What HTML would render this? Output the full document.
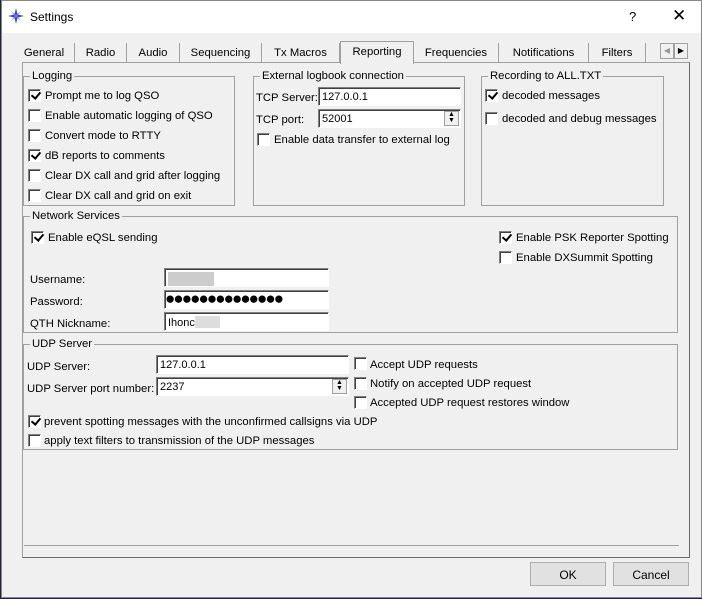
<!DOCTYPE html><html><head><style>
*{box-sizing:border-box;margin:0;padding:0}
body{width:702px;height:599px;background:#1a2340;position:relative;overflow:hidden;font-family:"Liberation Sans",sans-serif;font-size:11.3px;color:#000}
.a{position:absolute;white-space:nowrap}
.l{margin-top:2px}
.cb + .a{margin-top:1px}
.win{position:absolute;left:1px;top:0;width:701px;height:598px;background:#f0f0f0;border:1px solid #888}
.title{position:absolute;left:0;top:0;width:100%;height:32px;background:#fff}
.pane{position:absolute;left:22px;top:62px;width:668px;height:496px;border:1px solid #a0a0a0;border-right-color:#696969;border-bottom-color:#696969;background:#f0f0f0}
.tab{position:absolute;top:43px;height:20px;border-right:1px solid #a0a0a0;padding-top:4px;text-align:center}
.gb{position:absolute;border:1px solid #a0a0a0}
.gl{position:absolute;top:-7px;left:6px;background:#f0f0f0;padding:0 2px}
.cb{position:absolute;width:13px;height:13px;background:#fff;border:1px solid;border-color:#808080 #fff #fff #808080;box-shadow:inset 1px 1px 0 #404040}
.cb.c::after{content:"";position:absolute;left:4px;top:0px;width:4px;height:7px;border:solid #000;border-width:0 2px 2px 0;transform:rotate(40deg)}
.in{position:absolute;height:19px;background:#fff;border:1px solid;border-color:#808080 #fff #fff #808080;box-shadow:inset 1px 1px 0 #404040;padding:3px 3px;font-size:11px}
.spin{position:absolute;width:15px;height:15px;border:1px solid #a0a0a0;background:#f0f0f0;font-size:7px;line-height:6px;text-align:center}
.btn{position:absolute;top:562px;height:24px;border:1px solid #adadad;background:#e1e1e1;text-align:center;padding-top:5px;font-size:12px}
</style></head><body>
<div class="win">
<div class="title"></div>
<svg class="a" style="left:6px;top:7px" width="16" height="16"><path d="M8 0L9.5 6.5L16 8L9.5 9.5L8 16L6.5 9.5L0 8L6.5 6.5Z" fill="#3b3bd6"/><path d="M3 3L8 7L13 3L9 8L13 13L8 9L3 13L7 8Z" fill="#7a7af0"/></svg>
<div class="a" style="left:28px;top:9px;font-size:12px">Settings</div>
<div class="a" style="left:627px;top:8px;font-size:13px">?</div>
<div class="a" style="left:670px;top:5px;font-size:17px">✕</div>
</div>
<div class="pane"></div>
<div class="tab" style="left:14px;width:61px">General</div>
<div class="tab" style="left:75px;width:52px">Radio</div>
<div class="tab" style="left:127px;width:53px">Audio</div>
<div class="tab" style="left:180px;width:82px">Sequencing</div>
<div class="tab" style="left:262px;width:78px">Tx Macros</div>
<div class="tab" style="left:340px;top:41px;height:23px;width:74px;background:#f0f0f0;border:1px solid #a0a0a0;border-bottom:none;z-index:2">Reporting</div>
<div class="tab" style="left:414px;width:85px">Frequencies</div>
<div class="tab" style="left:499px;width:90px">Notifications</div>
<div class="tab" style="left:589px;width:57px">Filters</div>
<div class="a" style="left:660px;top:43px;width:14px;height:16px;border:1px solid #a0a0a0;font-size:8px;color:#999;text-align:center;line-height:14px">◀</div>
<div class="a" style="left:674px;top:43px;width:14px;height:16px;border:1px solid #a0a0a0;font-size:8px;text-align:center;line-height:14px">▶</div>

<div class="gb" style="left:23px;top:76px;width:212px;height:130px"><span class="gl">Logging</span></div>
<div class="cb c" style="left:28px;top:89px"></div><div class="a" style="left:45px;top:89px">Prompt me to log QSO</div>
<div class="cb" style="left:28px;top:109px"></div><div class="a" style="left:45px;top:109px">Enable automatic logging of QSO</div>
<div class="cb" style="left:28px;top:129px"></div><div class="a" style="left:45px;top:129px">Convert mode to RTTY</div>
<div class="cb c" style="left:28px;top:149px"></div><div class="a" style="left:45px;top:149px">dB reports to comments</div>
<div class="cb" style="left:28px;top:169px"></div><div class="a" style="left:45px;top:169px">Clear DX call and grid after logging</div>
<div class="cb" style="left:28px;top:189px"></div><div class="a" style="left:45px;top:189px">Clear DX call and grid on exit</div>

<div class="gb" style="left:253px;top:76px;width:212px;height:130px"><span class="gl">External logbook connection</span></div>
<div class="a l" style="left:256px;top:90px">TCP Server:</div><div class="in" style="left:318px;top:87px;width:143px">127.0.0.1</div>
<div class="a l" style="left:256px;top:112px">TCP port:</div><div class="in" style="left:318px;top:109px;width:143px">52001</div>
<div class="spin" style="left:444px;top:111px">▲<br>▼</div>
<div class="cb" style="left:257px;top:133px"></div><div class="a" style="left:274px;top:133px">Enable data transfer to external log</div>

<div class="gb" style="left:481px;top:76px;width:183px;height:130px"><span class="gl">Recording to ALL.TXT</span></div>
<div class="cb c" style="left:485px;top:89px"></div><div class="a" style="left:502px;top:89px">decoded messages</div>
<div class="cb" style="left:485px;top:112px"></div><div class="a" style="left:502px;top:112px">decoded and debug messages</div>

<div class="gb" style="left:23px;top:216px;width:655px;height:117px"><span class="gl">Network Services</span></div>
<div class="cb c" style="left:31px;top:231px"></div><div class="a" style="left:48px;top:231px">Enable eQSL sending</div>
<div class="cb c" style="left:499px;top:231px"></div><div class="a" style="left:516px;top:231px">Enable PSK Reporter Spotting</div>
<div class="cb" style="left:499px;top:251px"></div><div class="a" style="left:516px;top:251px">Enable DXSummit Spotting</div>
<div class="a l" style="left:30px;top:272px">Username:</div><div class="in" style="left:164px;top:268px;width:165px"><span style="display:inline-block;width:46px;height:14px;background:#ccc"></span></div>
<div class="a l" style="left:30px;top:294px">Password:</div><div class="in" style="left:164px;top:290px;width:165px;font-size:17px;line-height:13px;padding:1px 0;overflow:hidden;letter-spacing:-1.9px">●●●●●●●●●●●●●●</div>
<div class="a l" style="left:30px;top:316px">QTH Nickname:</div><div class="in" style="left:164px;top:312px;width:165px">Ihonc<span style="display:inline-block;width:25px;height:12px;background:#ddd;vertical-align:-2px"></span></div>

<div class="gb" style="left:23px;top:344px;width:655px;height:106px"><span class="gl">UDP Server</span></div>
<div class="a l" style="left:27px;top:359px">UDP Server:</div><div class="in" style="left:156px;top:355px;width:193px">127.0.0.1</div>
<div class="a l" style="left:27px;top:381px">UDP Server port number:</div><div class="in" style="left:156px;top:377px;width:193px">2237</div>
<div class="spin" style="left:332px;top:379px">▲<br>▼</div>
<div class="cb" style="left:354px;top:357px"></div><div class="a" style="left:370px;top:358px">Accept UDP requests</div>
<div class="cb" style="left:354px;top:377px"></div><div class="a" style="left:370px;top:377px">Notify on accepted UDP request</div>
<div class="cb" style="left:354px;top:396px"></div><div class="a" style="left:370px;top:396px">Accepted UDP request restores window</div>
<div class="cb c" style="left:28px;top:415px"></div><div class="a" style="left:44px;top:415px">prevent spotting messages with the unconfirmed callsigns via UDP</div>
<div class="cb" style="left:28px;top:434px"></div><div class="a" style="left:44px;top:434px">apply text filters to transmission of the UDP messages</div>

<div class="a" style="left:24px;top:545px;width:655px;height:1px;background:#a0a0a0"></div>
<div class="btn" style="left:530px;width:76px">OK</div>
<div class="btn" style="left:613px;width:76px">Cancel</div>
</body></html>
